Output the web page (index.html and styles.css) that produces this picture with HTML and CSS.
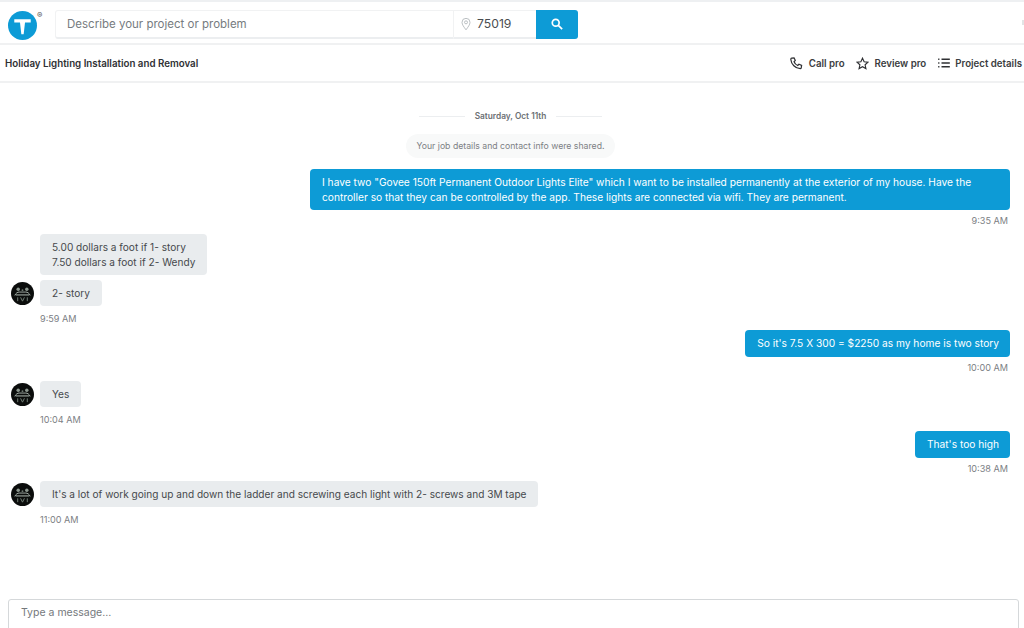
FILE: index.html
```html
<!DOCTYPE html>
<html lang="en">
<head>
  <meta charset="UTF-8" />
  <meta name="viewport" content="width=device-width, initial-scale=1.0" />
  <title>Holiday Lighting Installation and Removal</title>
  <link rel="stylesheet" href="styles.css">
</head>
<body>
  <header class="top-bar">
    <div class="logo">
      <svg viewBox="0 0 30 30" width="29" height="29">
        <circle cx="15" cy="15" r="15" fill="#0d9bd6" />
        <path d="M6.500 8.500h17v3.400h-5.900l-1.400 12.100h-2.400l-1.400-12.100H6.500Z" fill="#fff" />
      </svg>
      <span class="logo-mark">®</span>
    </div>
    <form class="search">
      <div class="search-project">Describe your project or problem</div>
      <div class="search-zip">
        <svg viewBox="0 0 12 16" width="10" height="14" fill="none" stroke="#b5babd" stroke-width="1.100">
          <path d="M6 15C3.500 11.500 1.200 8.800 1.200 6a4.800 4.800 0 0 1 9.600 0c0 2.800-2.300 5.500-4.800 9Z" />
          <circle cx="6" cy="6" r="1.800" />
        </svg>
        <span>75019</span>
      </div>
      <button class="search-btn" type="button">
        <svg viewBox="0 0 14 14" width="12" height="12" fill="none" stroke="#fff" stroke-width="2">
          <circle cx="5.500" cy="5.500" r="4" />
          <path d="M8.500 8.500 13 13" />
        </svg>
      </button>
    </form>
    <span class="edge-mark"></span>
  </header>

  <nav class="sub-bar">
    <h1 class="project-title">Holiday Lighting Installation and Removal</h1>
    <div class="actions">
      <a class="action">
        <svg viewBox="0 0 16 16" width="13" height="13" fill="none" stroke="#2f3033" stroke-width="1.500">
          <path d="M2 1.500 5 1l1.500 3.200L5 5.800c.7 2 2.400 3.800 4.500 4.700l1.500-1.600 3.300 1.500-.5 3c-.1.600-.6 1-1.200 1C6.500 14 1.500 8.800 1 3c0-.7.400-1.400 1-1.500Z" />
        </svg>
        Call pro
      </a>
      <a class="action">
        <svg viewBox="0 0 16 16" width="13" height="13" fill="none" stroke="#2f3033" stroke-width="1.400">
          <path d="m8 1.500 2 4.400 4.700.5-3.500 3.200 1 4.700L8 12l-4.200 2.300 1-4.700L1.300 6.400 6 5.900Z" />
        </svg>
        Review pro
      </a>
      <a class="action">
        <svg viewBox="0 0 14 12" width="12" height="10" fill="none" stroke="#2f3033" stroke-width="1.700">
          <path d="M0 1.500h1.500M0 6h1.500M0 10.500h1.500M4 1.500h10M4 6h10M4 10.500h10" />
        </svg>
        Project details
      </a>
    </div>
  </nav>

  <main class="chat">
    <div class="date-row"><span class="date-line"></span><span class="date-text">Saturday, Oct 11th</span><span class="date-line"></span></div>
    <div class="notice-row"><span class="notice">Your job details and contact info were shared.</span></div>

    <div class="group-out first">
      <div class="bubble-out wide">I have two "Govee 150ft Permanent Outdoor Lights Elite" which I want to be installed permanently at the exterior of my house. Have the controller so that they can be controlled by the app. These lights are connected via wifi. They are permanent.</div>
      <div class="time-out">9:35 AM</div>
    </div>

    <div class="group-in gap-8">
      <div class="msg-in"><div class="bubble-in">5.00 dollars a foot if 1- story<br>7.50 dollars a foot if 2- Wendy</div></div>
      <div class="msg-in with-avatar">
        <svg class="avatar" viewBox="0 0 24 24"><use href="#pro-avatar" /></svg>
        <div class="bubble-in">2- story</div>
      </div>
      <div class="time-in">9:59 AM</div>
    </div>

    <div class="group-out gap-6">
      <div class="bubble-out">So it's 7.5 X 300 = $2250 as my home is two story</div>
      <div class="time-out">10:00 AM</div>
    </div>

    <div class="group-in gap-8">
      <div class="msg-in with-avatar">
        <svg class="avatar" viewBox="0 0 24 24"><use href="#pro-avatar" /></svg>
        <div class="bubble-in">Yes</div>
      </div>
      <div class="time-in">10:04 AM</div>
    </div>

    <div class="group-out gap-6">
      <div class="bubble-out">That's too high</div>
      <div class="time-out">10:38 AM</div>
    </div>

    <div class="group-in gap-7">
      <div class="msg-in with-avatar">
        <svg class="avatar" viewBox="0 0 24 24"><use href="#pro-avatar" /></svg>
        <div class="bubble-in">It's a lot of work going up and down the ladder and screwing each light with 2- screws and 3M tape</div>
      </div>
      <div class="time-in">11:00 AM</div>
    </div>
  </main>

  <footer class="composer">
    <div class="composer-box">Type a message...</div>
  </footer>

  <svg class="defs" width="0" height="0">
    <symbol id="pro-avatar" viewBox="0 0 24 24">
      <circle cx="12" cy="12" r="12" fill="#0b0d0c" />
      <circle cx="7.500" cy="7.500" r="1.800" fill="#8c978f" />
      <circle cx="16.500" cy="7.500" r="1.800" fill="#8c978f" />
      <circle cx="12" cy="8.500" r="1" fill="#6d7870" />
      <path d="M4 14c1-2.500 3-3.500 4.500-3.500h7c1.500 0 3.500 1 4.500 3.500" fill="none" stroke="#a4afa7" stroke-width="1" />
      <path d="M5 13.500h14" stroke="#b6c0b9" stroke-width="1" />
      <path d="M7 16v4M10 16l2 4 2-4M17 16v4" fill="none" stroke="#76837a" stroke-width="1" />
    </symbol>
  </svg>
</body>
</html>
```

FILE: styles.css
```css
/* Reset & Base */
* {
  margin: 0;
  padding: 0;
  box-sizing: border-box;
}

body {
  width: 1024px;
  height: 628px;
  overflow: hidden;
  background: #fff;
  color: #2f3033;
  font-family: "Inter", sans-serif;
  font-size: 10px;
  border-top: 2px solid #eef0f2;
}

.defs {
  display: block;
}

/* Top bar */
.top-bar {
  display: flex;
  align-items: center;
  height: 43px;
  padding-left: 8px;
  border-bottom: 2px solid #f0f1f2;
}

.logo {
  display: flex;
  width: 47px;
  align-self: flex-start;
  padding-top: 9px;
}

.logo-mark {
  font-size: 8px;
  line-height: 8px;
  color: #555;
}

.search {
  display: flex;
  height: 29px;
  margin-top: 3px;
}

.search-project {
  width: 399px;
  padding-left: 11px;
  line-height: 26px;
  font-size: 11.500px;
  color: #767b80;
  border: 1px solid #f1f2f3;
  border-bottom: 2px solid #eceef0;
  border-radius: 3px 0 0 3px;
}

.search-zip {
  display: flex;
  align-items: center;
  gap: 6px;
  width: 82px;
  padding-left: 7px;
  font-size: 12.200px;
  color: #4a4d50;
  border-bottom: 2px solid #eceef0;
  border-top: 1px solid #f1f2f3;
}

.search-btn {
  display: flex;
  align-items: center;
  justify-content: center;
  width: 42px;
  border: none;
  border-radius: 0 3px 3px 0;
  background: #0d9bd6;
}

.edge-mark {
  width: 2px;
  height: 5px;
  margin: 0 0 0 auto;
  background: #e2e4e5;
}

/* Sub bar */
.sub-bar {
  display: flex;
  align-items: center;
  justify-content: space-between;
  height: 38px;
  padding: 0 2px 0 5px;
  border-bottom: 2px solid #f0f1f2;
}

.project-title {
  font-size: 9.750px;
  font-weight: 600;
  color: #2f3033;
}

.actions {
  display: flex;
  gap: 11.500px;
}

.action {
  display: flex;
  align-items: center;
  gap: 5.500px;
  font-size: 9.700px;
  font-weight: 600;
  color: #3a3c40;
}

/* Chat */
.chat {
  height: 516px;
  padding: 0 14px 0 11px;
}

.date-row {
  display: flex;
  align-items: center;
  justify-content: center;
  gap: 10px;
  padding-top: 26px;
  height: 40px;
}

.date-line {
  width: 46px;
  height: 1px;
  background: #eceef0;
}

.date-text {
  font-size: 8.300px;
  font-weight: 600;
  color: #6c7074;
}

.notice-row {
  display: flex;
  justify-content: center;
  margin-top: 11px;
}

.notice {
  padding: 0 11px;
  line-height: 24px;
  font-size: 8.700px;
  color: #7c8084;
  background: #f8f9f9;
  border-radius: 12px;
}

.group-out {
  display: flex;
  flex-direction: column;
  align-items: flex-end;
}

.first {
  margin-top: 11px;
}

.bubble-out {
  padding: 6px 11px 6px 12px;
  font-size: 10.200px;
  line-height: 15px;
  color: #fff;
  background: #0d9bd6;
  border-radius: 4px;
}

.wide {
  width: 700px;
  padding-bottom: 5px;
}

.time-out {
  margin: 6px 2px 0 0;
  font-size: 9.100px;
  line-height: 10px;
  color: #7c8084;
}

.group-in {
  display: flex;
  flex-direction: column;
  gap: 5px;
}

.msg-in {
  display: flex;
  padding-left: 29px;
  align-items: center;
}

.with-avatar {
  gap: 6px;
  padding-left: 0;
}

.avatar {
  width: 23px;
  height: 23px;
}

.bubble-in {
  padding: 6px 12px 5px;
  font-size: 10.100px;
  line-height: 15px;
  color: #46494c;
  background: #e9ecee;
  border-radius: 4px;
}

.group-in .time-in {
  margin: 3px 0 0 29px;
  font-size: 9.100px;
  line-height: 10px;
  color: #7c8084;
}

.gap-6 { margin-top: 6px; }
.gap-7 { margin-top: 7px; }
.gap-8 { margin-top: 8px; }

/* Composer */
.composer {
  padding: 0 5px 0 8px;
}

.composer-box {
  height: 30px;
  padding: 6px 12px;
  font-size: 10.500px;
  color: #74787c;
  border: 1px solid #d5d8da;
  border-radius: 3px 3px 0 0;
}
```
